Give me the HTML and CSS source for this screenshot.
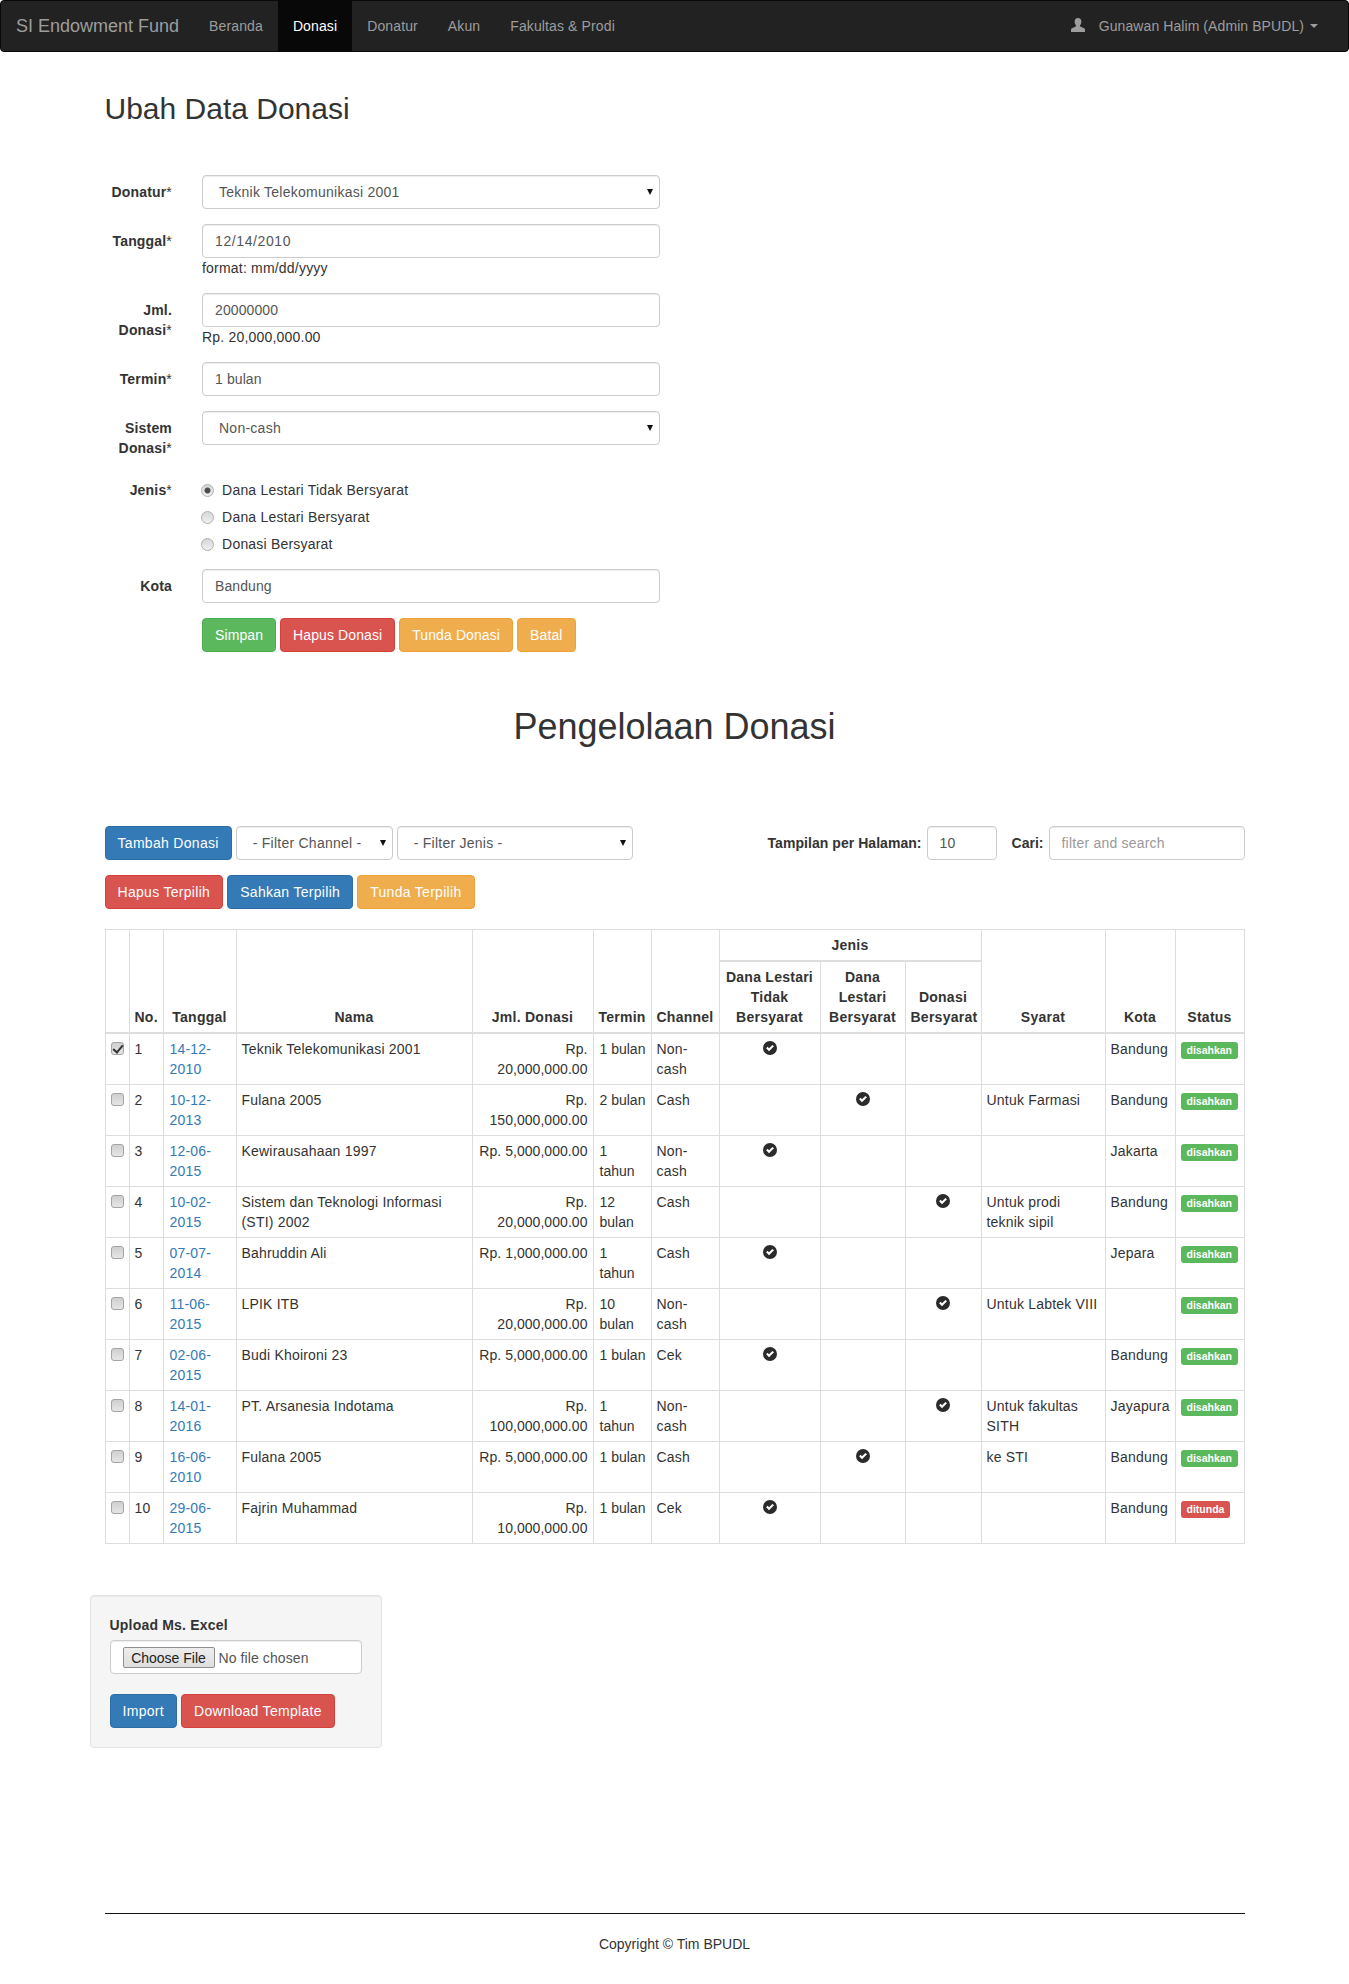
FILE: index.html
```html
<!DOCTYPE html>
<html lang="id">
<head>
    <meta charset="UTF-8">
    <title>Ubah Data Donasi</title>
    <link rel="stylesheet" href="styles.css">
</head>
<body>
    <nav class="navbar">
        <a class="brand" href="#">SI Endowment Fund</a>
        <ul class="nav">
            <li><a href="#">Beranda</a></li>
            <li class="active"><a href="#">Donasi</a></li>
            <li><a href="#">Donatur</a></li>
            <li><a href="#">Akun</a></li>
            <li><a href="#">Fakultas &amp; Prodi</a></li>
        </ul>
        <a class="user" href="#">
            <svg class="user-icon" viewBox="0 0 14 14"><path d="M7 0c2.200 0 3.400 1.600 3.400 3.600 0 1.400-.5 2.900-1.400 3.900-.3.4-.2.9.3 1.100l3.200 1.300c1 .4 1.500 1 1.500 2.100V14H0v-2c0-1.100.5-1.700 1.500-2.100l3.200-1.300c.5-.2.6-.7.3-1.100-.9-1-1.400-2.500-1.400-3.900C3.600 1.600 4.800 0 7 0z"/></svg>
            <span>Gunawan Halim (Admin BPUDL)</span>
            <i class="caret"></i>
        </a>
    </nav>

    <div class="container">
        <h2 class="page-title">Ubah Data Donasi</h2>

        <form class="form-horizontal">
            <div class="form-group">
                <label class="control-label">Donatur<small>*</small></label>
                <div class="field">
                    <div class="select-wrap">
                        <select class="form-control"><option>Teknik Telekomunikasi 2001</option></select>
                    </div>
                </div>
            </div>
            <div class="form-group">
                <label class="control-label">Tanggal<small>*</small></label>
                <div class="field">
                    <input class="form-control date" type="text" value="12/14/2010">
                    format: mm/dd/yyyy
                </div>
            </div>
            <div class="form-group">
                <label class="control-label">Jml.<br>Donasi<small>*</small></label>
                <div class="field">
                    <input class="form-control" type="text" value="20000000">
                    Rp. 20,000,000.00
                </div>
            </div>
            <div class="form-group">
                <label class="control-label">Termin<small>*</small></label>
                <div class="field">
                    <input class="form-control" type="text" value="1 bulan">
                </div>
            </div>
            <div class="form-group">
                <label class="control-label">Sistem<br>Donasi<small>*</small></label>
                <div class="field">
                    <div class="select-wrap">
                        <select class="form-control"><option>Non-cash</option></select>
                    </div>
                </div>
            </div>
            <div class="form-group">
                <label class="control-label">Jenis<small>*</small></label>
                <div class="field">
                    <label class="radio"><input type="radio" name="jenis" checked> Dana Lestari Tidak Bersyarat</label>
                    <label class="radio"><input type="radio" name="jenis"> Dana Lestari Bersyarat</label>
                    <label class="radio"><input type="radio" name="jenis"> Donasi Bersyarat</label>
                </div>
            </div>
            <div class="form-group">
                <label class="control-label">Kota</label>
                <div class="field">
                    <input class="form-control" type="text" value="Bandung">
                </div>
            </div>
            <div class="form-group">
                <div class="field field-offset btn-row">
                    <button type="button" class="btn btn-success">Simpan</button>
                    <button type="button" class="btn btn-danger">Hapus Donasi</button>
                    <button type="button" class="btn btn-warning">Tunda Donasi</button>
                    <button type="button" class="btn btn-warning">Batal</button>
                </div>
            </div>
        </form>

        <h1 class="section-title">Pengelolaan Donasi</h1>

        <div class="toolbar">
            <div class="btn-row">
                <button type="button" class="btn btn-primary">Tambah Donasi</button>
                <div class="select-wrap filter-channel">
                    <select class="form-control"><option>- Filter Channel -</option></select>
                </div>
                <div class="select-wrap filter-jenis">
                    <select class="form-control"><option>- Filter Jenis -</option></select>
                </div>
            </div>
            <div class="table-tools">
                <label>Tampilan per Halaman:</label>
                <input class="form-control per-page" type="text" value="10">
                <label class="search-label">Cari:</label>
                <input class="form-control search" type="text" placeholder="filter and search">
            </div>
        </div>

        <div class="btn-row bulk-actions">
            <button type="button" class="btn btn-danger">Hapus Terpilih</button>
            <button type="button" class="btn btn-primary">Sahkan Terpilih</button>
            <button type="button" class="btn btn-warning">Tunda Terpilih</button>
        </div>

        <table class="table">
            <colgroup>
                <col class="c-check"><col class="c-no"><col class="c-date"><col class="c-name"><col class="c-amount">
                <col class="c-term"><col class="c-channel"><col class="c-j1"><col class="c-j2"><col class="c-j3">
                <col class="c-syarat"><col class="c-kota"><col class="c-status">
            </colgroup>
            <thead>
                <tr>
                    <th rowspan="2"></th>
                    <th rowspan="2">No.</th>
                    <th rowspan="2">Tanggal</th>
                    <th rowspan="2">Nama</th>
                    <th rowspan="2">Jml. Donasi</th>
                    <th rowspan="2">Termin</th>
                    <th rowspan="2">Channel</th>
                    <th colspan="3">Jenis</th>
                    <th rowspan="2">Syarat</th>
                    <th rowspan="2">Kota</th>
                    <th rowspan="2">Status</th>
                </tr>
                <tr>
                    <th>Dana Lestari Tidak Bersyarat</th>
                    <th>Dana Lestari Bersyarat</th>
                    <th>Donasi Bersyarat</th>
                </tr>
            </thead>
            <tbody id="rows"></tbody>
        </table>

        <form class="well">
            <label class="well-label">Upload Ms. Excel</label>
            <input class="form-control file" type="file">
            <div class="btn-row">
                <button type="button" class="btn btn-primary">Import</button>
                <button type="button" class="btn btn-danger">Download Template</button>
            </div>
        </form>

        <footer class="footer">
            <p>Copyright © Tim BPUDL</p>
        </footer>
    </div>

    <script src="rows.js"></script>
</body>
</html>
```

FILE: rows.js
```js
// data donasi untuk tabel pengelolaan
var donasi = [
    [1, '14-12-2010', 'Teknik Telekomunikasi 2001', 'Rp. 20,000,000.00', '1 bulan', 'Non-cash', 1, '', 'Bandung', 'disahkan'],
    [2, '10-12-2013', 'Fulana 2005', 'Rp. 150,000,000.00', '2 bulan', 'Cash', 2, 'Untuk Farmasi', 'Bandung', 'disahkan'],
    [3, '12-06-2015', 'Kewirausahaan 1997', 'Rp. 5,000,000.00', '1<br>tahun', 'Non-cash', 1, '', 'Jakarta', 'disahkan'],
    [4, '10-02-2015', 'Sistem dan Teknologi Informasi (STI) 2002', 'Rp. 20,000,000.00', '12 bulan', 'Cash', 3, 'Untuk prodi teknik sipil', 'Bandung', 'disahkan'],
    [5, '07-07-2014', 'Bahruddin Ali', 'Rp. 1,000,000.00', '1<br>tahun', 'Cash', 1, '', 'Jepara', 'disahkan'],
    [6, '11-06-2015', 'LPIK ITB', 'Rp. 20,000,000.00', '10 bulan', 'Non-cash', 3, 'Untuk Labtek VIII', '', 'disahkan'],
    [7, '02-06-2015', 'Budi Khoironi 23', 'Rp. 5,000,000.00', '1 bulan', 'Cek', 1, '', 'Bandung', 'disahkan'],
    [8, '14-01-2016', 'PT. Arsanesia Indotama', 'Rp. 100,000,000.00', '1<br>tahun', 'Non-cash', 3, 'Untuk fakultas SITH', 'Jayapura', 'disahkan'],
    [9, '16-06-2010', 'Fulana 2005', 'Rp. 5,000,000.00', '1 bulan', 'Cash', 2, 'ke STI', 'Bandung', 'disahkan'],
    [10, '29-06-2015', 'Fajrin Muhammad', 'Rp. 10,000,000.00', '1 bulan', 'Cek', 1, '', 'Bandung', 'ditunda']
];

var okIcon = '<svg class="ok-icon" viewBox="0 0 14 14"><path fill-rule="evenodd" d="M7 0a7 7 0 1 1 0 14A7 7 0 0 1 7 0zM3.100 7.300 6 10.300l5-5L9.400 3.900 6 7.200 4.600 5.800z"/></svg>';

var html = '';
donasi.forEach(function (d, i) {
    var jenis = '';
    for (var j = 1; j <= 3; j++) {
        jenis += '<td class="center">' + (d[6] === j ? okIcon : '') + '</td>';
    }
    html += '<tr>' +
        '<td><input type="checkbox"' + (i === 0 ? ' checked' : '') + '></td>' +
        '<td>' + d[0] + '</td>' +
        '<td class="shift"><a href="#">' + d[1] + '</a></td>' +
        '<td>' + d[2] + '</td>' +
        '<td class="right">' + d[3] + '</td>' +
        '<td class="term shift">' + d[4] + '</td>' +
        '<td>' + d[5] + '</td>' +
        jenis +
        '<td>' + d[7] + '</td>' +
        '<td>' + d[8] + '</td>' +
        '<td><span class="label ' + (d[9] === 'ditunda' ? 'label-danger' : 'label-success') + '">' + d[9] + '</span></td>' +
        '</tr>';
});
document.getElementById('rows').innerHTML = html;
```

FILE: styles.css
```css
* {
    box-sizing: border-box;
}
body {
    margin: 0;
    font-family: "Liberation Sans", Arial, sans-serif;
    font-size: 14px;
    line-height: 20px;
    letter-spacing: .2px;
    color: #333;
    background-color: #fff;
}
a {
    color: #337ab7;
    text-decoration: none;
}

/* navbar */
.navbar {
    display: flex;
    align-items: stretch;
    height: 52px;
    margin-bottom: 20px;
    background-color: #222;
    border: 1px solid #080808;
    border-radius: 4px;
    letter-spacing: .12px;
}
.brand {
    padding: 15px;
    font-size: 18px;
    letter-spacing: 0;
    color: #9d9d9d;
}
.nav {
    display: flex;
    margin: 0;
    padding: 0;
    list-style: none;
}
.nav a {
    display: block;
    height: 50px;
    padding: 15px;
    color: #9d9d9d;
}
.nav .active a {
    color: #fff;
    background-color: #080808;
}
.user {
    display: flex;
    align-items: center;
    margin-left: auto;
    padding: 0 30px 0 15px;
    letter-spacing: .08px;
    color: #9d9d9d;
}
.user-icon {
    width: 14px;
    height: 14px;
    margin-right: 14px;
    margin-top: -3px;
    fill: #9d9d9d;
}
.caret {
    width: 0;
    height: 0;
    margin-left: 6px;
    border-top: 4px solid #9d9d9d;
    border-left: 4px solid transparent;
    border-right: 4px solid transparent;
}

.container {
    width: 1170px;
    margin: 0 auto;
    padding: 0 15px;
}
.page-title {
    margin: 40px 0 50px;
    font-size: 30px;
    font-weight: 500;
    line-height: 33px;
    letter-spacing: 0;
}

/* form */
.form-horizontal {
    width: 555px;
}
.form-group {
    display: flex;
    margin-bottom: 15px;
}
.control-label {
    flex: none;
    width: 67.5px;
    padding-top: 7px;
    text-align: right;
    font-weight: bold;
    letter-spacing: .18px;
}
.control-label small {
    font-size: 14px;
    font-weight: normal;
}
.field {
    flex: 1;
    margin-left: 30px;
    min-width: 0;
}
.field-offset {
    margin-left: 97.5px;
}
.field-offset .btn {
    letter-spacing: .1px;
}
.form-control {
    display: block;
    width: 100%;
    height: 34px;
    padding: 6px 12px;
    font-family: inherit;
    font-size: 14px;
    line-height: 20px;
    letter-spacing: .1px;
    color: #555;
    background-color: #fff;
    border: 1px solid #ccc;
    border-radius: 4px;
    box-shadow: inset 0 1px 1px rgba(0, 0, 0, .075);
}
.form-control::placeholder {
    color: #999;
}
.date {
    letter-spacing: .6px;
}
select.form-control {
    appearance: none;
    padding-left: 16px;
    letter-spacing: .25px;
}
.select-wrap {
    position: relative;
}
.select-wrap::after {
    content: "";
    position: absolute;
    right: 7px;
    top: 14px;
    border-top: 6px solid #111;
    border-left: 3px solid transparent;
    border-right: 3px solid transparent;
    pointer-events: none;
}
.radio {
    display: block;
    height: 27px;
    padding-top: 7px;
}
input[type="radio"] {
    appearance: none;
    width: 13px;
    height: 13px;
    margin: 0 4px 0 -1px;
    vertical-align: -2px;
    border: 1px solid #b0b0b0;
    border-radius: 50%;
    background: linear-gradient(#d6d6d6, #f0f0f0);
}
input[type="radio"]:checked {
    background: radial-gradient(circle, #4d4d4d 0, #4d4d4d 2.5px, transparent 3.5px), linear-gradient(#d6d6d6, #f0f0f0);
}
input[type="checkbox"] {
    appearance: none;
    display: block;
    position: relative;
    width: 13px;
    height: 13px;
    margin: 3px 0 0;
    border: 1px solid #a4a4a4;
    border-radius: 3px;
    background: linear-gradient(#cfcfcf, #e6e6e6);
}
input[type="checkbox"]:checked::after {
    content: "";
    position: absolute;
    left: 3.5px;
    top: 0;
    width: 4px;
    height: 8px;
    border-right: 2px solid #333;
    border-bottom: 2px solid #333;
    transform: rotate(40deg);
}

/* buttons */
.btn-row {
    display: flex;
    gap: 4px;
}
.btn {
    height: 34px;
    padding: 6px 12px;
    font-family: inherit;
    font-size: 14px;
    line-height: 20px;
    letter-spacing: .3px;
    color: #fff;
    border: 1px solid transparent;
    border-radius: 4px;
}
.btn-success {
    background-color: #5cb85c;
    border-color: #4cae4c;
}
.btn-danger {
    background-color: #d9534f;
    border-color: #d43f3a;
}
.btn-warning {
    background-color: #f0ad4e;
    border-color: #eea236;
}
.btn-primary {
    background-color: #337ab7;
    border-color: #2e6da4;
}

.section-title {
    margin: 55px 0 79px;
    font-size: 36px;
    font-weight: 500;
    line-height: 40px;
    letter-spacing: 0;
    text-align: center;
}
.toolbar {
    display: flex;
    justify-content: space-between;
    margin-bottom: 15px;
}
.filter-channel {
    width: 157px;
}
.filter-jenis {
    width: 236px;
}
.table-tools {
    display: flex;
    align-items: center;
    font-weight: bold;
    letter-spacing: .05px;
}
.per-page {
    width: 70px;
    margin-left: 5px;
}
.search-label {
    margin-left: 15px;
    letter-spacing: 0;
}
.search {
    width: 196px;
    margin-left: 5px;
    letter-spacing: .22px;
}
.bulk-actions {
    margin-bottom: 20px;
}

/* table */
.table {
    width: 1139px;
    table-layout: fixed;
    border-collapse: collapse;
    margin-bottom: 51px;
    border: 1px solid #ddd;
}
.table th,
.table td {
    padding: 5px;
    border: 1px solid #ddd;
    vertical-align: top;
}
.table th {
    text-align: center;
    vertical-align: bottom;
    border-bottom-width: 2px;
    letter-spacing: .25px;
}
.c-check { width: 24px; }
.c-no { width: 34px; }
.c-date { width: 73px; }
.c-name { width: 236px; }
.c-amount { width: 121px; }
.c-term { width: 58px; }
.c-channel { width: 68px; }
.c-j1 { width: 101px; }
.c-j2 { width: 85px; }
.c-j3 { width: 76px; }
.c-syarat { width: 124px; }
.c-kota { width: 70px; }
.c-status { width: 69px; }
.center {
    text-align: center;
}
.table .shift {
    padding-left: 6px;
    padding-right: 4px;
}
.table .right {
    text-align: right;
    letter-spacing: .05px;
}
.table .term {
    letter-spacing: 0;
}
.ok-icon {
    display: block;
    width: 14px;
    height: 14px;
    margin: 2px auto 0;
    fill: #2b2b2b;
}
.label {
    display: inline-block;
    padding: 2px 6px 3px;
    font-size: 10.5px;
    font-weight: bold;
    line-height: 12px;
    letter-spacing: 0;
    color: #fff;
    vertical-align: top;
    margin-top: 3px;
    border-radius: 3px;
}
.label-success {
    background-color: #5cb85c;
}
.label-danger {
    background-color: #d9534f;
}

/* upload */
.well {
    width: 292.5px;
    margin-left: -15px;
    padding: 19px;
    background-color: #f5f5f5;
    border: 1px solid #e3e3e3;
    border-radius: 4px;
    box-shadow: inset 0 1px 1px rgba(0, 0, 0, .05);
}
.well-label {
    display: block;
    margin-bottom: 5px;
    font-weight: bold;
    letter-spacing: .2px;
}
.file {
    margin-bottom: 20px;
    padding-top: 6px;
}
.file::file-selector-button {
    height: 21px;
    width: 92px;
    margin-right: 4px;
    padding: 0;
    font-family: inherit;
    font-size: 14px;
    color: #222;
    background: linear-gradient(#ededed, #dedede);
    border: 1px solid #8f8f8f;
    border-radius: 2px;
}

.footer {
    margin-top: 165px;
    border-top: 1px solid #111;
    padding-top: 20px;
    text-align: center;
    letter-spacing: 0;
}
.footer p {
    margin: 0;
    padding-bottom: 31px;
}
```
